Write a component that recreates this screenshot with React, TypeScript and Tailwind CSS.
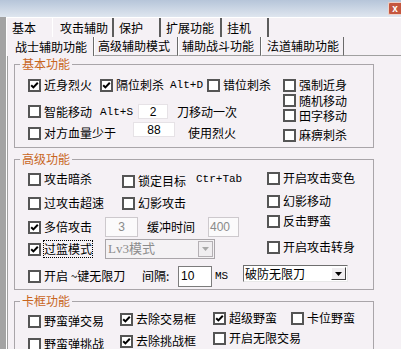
import React from 'react'

/** Classic sunken checkbox, 13px square. */
function Box({ checked }: { checked?: boolean }) {
  return (
    <span className="w-[13px] h-[13px] shrink-0 border-2 border-[#555555] bg-white flex items-center justify-center">
      {checked && (
        <svg width="9" height="9" viewBox="0 0 9 9">
          <path d="M1.2 4.2 3.4 6.4 7.8 1.8" fill="none" stroke="#000" strokeWidth="2" />
        </svg>
      )}
    </span>
  )
}

interface CheckProps {
  label: string
  checked?: boolean
  focus?: boolean
  className?: string
}

/** Checkbox with its caption to the right. */
function Check({ label, checked, focus, className = '' }: CheckProps) {
  return (
    <div className={`flex items-center shrink-0 ${className}`}>
      <Box checked={checked} />
      <span
        className={`ml-[3px] whitespace-nowrap ${
          focus ? 'leading-[16px] outline-1 outline-dotted outline-black' : 'leading-[14px]'
        }`}
      >
        {label}
      </span>
    </div>
  )
}

/** Group box with an orange caption sitting on the top border. */
function Group({
  title,
  className = '',
  children
}: {
  title: string
  className?: string
  children: React.ReactNode
}) {
  return (
    <div className={`relative ml-[6px] w-[360px] shrink-0 border border-[#a9a5a9] ${className}`}>
      <span className="absolute -top-[8px] left-[5px] px-[2px] bg-[#f5f1f5] text-[#c8661e] leading-[14px]">
        {title}
      </span>
      {children}
    </div>
  )
}

const mono = "font-['Liberation_Mono',monospace] text-[11px]"

export default function App() {
  return (
    <div className="w-[401px] h-[349px] overflow-hidden bg-[#f5f1f5] text-black text-[12px] leading-[16px] font-['Noto_Sans_CJK_SC',sans-serif] flex flex-col">
      {/* title bar */}
      <div className="h-[17px] shrink-0 bg-gradient-to-b from-[#b6c5d9] to-[#dfe6ef] flex items-start justify-end">
        <div className="mt-[2px] w-[13px] h-[13px] rounded-l-[2px] border border-r-0 border-[#efd2c8] bg-[#c5573f] text-white text-[10px] leading-[10px] font-bold font-['Liberation_Sans',sans-serif] flex items-center justify-center">
          x
        </div>
      </div>

      <div className="flex flex-1 min-h-0">
        {/* edge of the window behind */}
        <div className="w-[7px] shrink-0 bg-[#a3a3a3] border-r border-white" />

        <div className="flex-1 flex flex-col min-w-0">
          {/* top tab row */}
          <div className="h-[20px] shrink-0 flex border-t border-white">
            <div className="w-[45px] pl-[5px] flex items-center">基本</div>
            <div className="w-[62px] pl-[7px] flex items-center border-l border-white border-r-2 border-r-[#5c5c5c]">
              攻击辅助
            </div>
            <div className="w-[47px] pl-[5px] flex items-center border-r-2 border-r-[#5c5c5c]">保护</div>
            <div className="w-[61px] pl-[5px] flex items-center border-r-2 border-r-[#5c5c5c]">扩展功能</div>
            <div className="w-[47px] pl-[5px] flex items-center border-r-2 border-r-[#5c5c5c]">挂机</div>
          </div>

          {/* second tab row */}
          <div className="h-[19px] shrink-0 flex">
            <div className="w-[87px] pl-[8px] flex items-center border-r border-r-[#6a6a6a]">战士辅助功能</div>
            <div className="w-[84px] pl-[3px] flex items-center border-l border-white border-r border-r-[#6a6a6a] border-b border-b-[#a0a0a0]">
              高级辅助模式
            </div>
            <div className="w-[83px] pl-[3px] flex items-center border-l border-white border-r border-r-[#6a6a6a] border-b border-b-[#a0a0a0]">
              辅助战斗功能
            </div>
            <div className="w-[83px] pl-[5px] flex items-center border-l border-white border-r border-r-[#6a6a6a] border-b border-b-[#a0a0a0]">
              法道辅助功能
            </div>
            <div className="flex-1 border-b border-b-[#a0a0a0]" />
          </div>

          {/* tab page */}
          <div className="flex-1 flex flex-col border-l border-[#a0a0a0]">
            {/* 基本功能 */}
            <Group title="基本功能" className="mt-[8px] h-[84px] flex">
              <div className="ml-[13px] w-[255px] flex flex-col">
                <div className="mt-[10px] h-[20px] flex items-center">
                  <Check label="近身烈火" checked className="w-[72px]" />
                  <Check label="隔位刺杀" checked className="w-[70px]" />
                  <span className={`w-[37px] ${mono}`}>Alt+D</span>
                  <Check label="错位刺杀" />
                </div>
                <div className="mt-[6px] h-[21px] flex items-center">
                  <Check label="智能移动" className="w-[72px]" />
                  <span className={`w-[38px] ${mono}`}>Alt+S</span>
                  <div className="w-[30px] h-[15px] bg-white border border-[#e6e2e6] flex items-center justify-center font-['Liberation_Sans',sans-serif]">
                    2
                  </div>
                  <span className="ml-[9px]">刀移动一次</span>
                </div>
                <div className="h-[22px] flex items-center">
                  <Check label="对方血量少于" className="w-[105px]" />
                  <div className="self-start w-[42px] h-[15px] bg-white border border-[#e6e2e6] flex items-center justify-center font-['Liberation_Sans',sans-serif]">
                    88
                  </div>
                  <span className="ml-[13px]">使用烈火</span>
                </div>
              </div>
              <div className="flex flex-col">
                <Check label="强制近身" className="mt-[12px] h-[16px]" />
                <Check label="随机移动" className="h-[15px]" />
                <Check label="田字移动" className="h-[15px]" />
                <Check label="麻痹刺杀" className="mt-[4px] h-[16px]" />
              </div>
            </Group>

            {/* 高级功能 */}
            <Group title="高级功能" className="mt-[11px] h-[131px] flex flex-col">
              <div className="flex">
                <div className="ml-[13px] w-[239px] flex flex-col">
                  <div className="mt-[8px] h-[22px] flex items-center">
                    <Check label="攻击暗杀" className="w-[94px]" />
                    <Check label="锁定目标" className="w-[74px] mt-[4px]" />
                    <span className={mono}>Ctr+Tab</span>
                  </div>
                  <div className="mt-[2px] h-[22px] flex items-center">
                    <Check label="过攻击超速" className="w-[94px]" />
                    <Check label="幻影攻击" />
                  </div>
                  <div className="mt-[2px] h-[22px] flex items-center">
                    <Check label="多倍攻击" checked className="w-[77px]" />
                    <div className="w-[33px] h-[20px] bg-[#fbfafb] border border-[#cdc9cd] text-[#8a8a8a] flex items-center justify-center font-['Liberation_Sans',sans-serif]">
                      3
                    </div>
                    <span className="ml-[9px]">缓冲时间</span>
                    <div className="ml-[13px] w-[31px] h-[20px] bg-[#fbfafb] border border-[#cdc9cd] text-[#8a8a8a] pl-[1px] flex items-center font-['Liberation_Sans',sans-serif]">
                      400
                    </div>
                  </div>
                  <div className="h-[22px] flex items-center">
                    <Check label="过篮模式" checked focus className="w-[77px]" />
                    <div className="w-[110px] h-[20px] bg-[#f4f2f4] border border-[#a9a5a9] flex items-center">
                      <span className="pl-[2px] text-[#8c8c8c] font-['Liberation_Serif','Noto_Sans_CJK_SC',serif] text-[13px]">
                        Lv3模式
                      </span>
                      <div className="ml-auto mr-[1px] w-[15px] h-[16px] bg-[#f0eef0] border border-[#b4b0b4] flex items-center justify-center">
                        <svg width="7" height="4" viewBox="0 0 7 4">
                          <path d="M0 0h7L3.5 4z" fill="#a8a8a8" />
                        </svg>
                      </div>
                    </div>
                  </div>
                </div>
                <div className="flex flex-col">
                  <Check label="开启攻击变色" className="mt-[10px] h-[16px]" />
                  <Check label="幻影移动" className="mt-[7px] h-[16px]" />
                  <Check label="反击野蛮" className="mt-[4px] h-[16px]" />
                  <Check label="开启攻击转身" className="mt-[10px] h-[16px]" />
                </div>
              </div>
              <div className="ml-[13px] mt-[5px] h-[22px] flex items-center">
                <Check label="开启 ~键无限刀" className="w-[114px]" />
                <span className="w-[36px]">间隔:</span>
                <div className="w-[34px] h-[21px] bg-white border border-[#7c7c7c] pl-[2px] flex items-center font-['Liberation_Sans',sans-serif]">
                  10
                </div>
                <span className={`ml-[3px] w-[28px] ${mono} text-[10px]`}>MS</span>
                <div className="self-start w-[105px] h-[17px] bg-white border border-t-[#6e6e6e] border-l-[#6e6e6e] border-r-[#e8e8e8] border-b-[#e8e8e8] flex items-center">
                  <span className="pl-[1px]">破防无限刀</span>
                  <div className="ml-auto mr-px w-[15px] h-[13px] bg-[#f0eef0] border border-t-white border-l-white border-r-[#404040] border-b-[#404040] flex items-center justify-center">
                    <svg width="7" height="4" viewBox="0 0 7 4">
                      <path d="M0 0h7L3.5 4z" fill="#000" />
                    </svg>
                  </div>
                </div>
              </div>
            </Group>

            {/* 卡框功能 */}
            <Group title="卡框功能" className="mt-[11px] h-[60px] flex">
              <div className="ml-[13px] w-[92px] flex flex-col">
                <Check label="野蛮弹交易" className="mt-[11px] h-[16px]" />
                <Check label="野蛮弹挑战" className="mt-[7px] h-[16px]" />
              </div>
              <div className="w-[93px] flex flex-col">
                <Check label="去除交易框" checked className="mt-[9px] h-[16px]" />
                <Check label="去除挑战框" checked className="mt-[6px] h-[16px]" />
              </div>
              <div className="w-[78px] flex flex-col">
                <Check label="超级野蛮" checked className="mt-[8px] h-[16px]" />
                <Check label="开启无限交易" className="mt-[4px] h-[16px]" />
              </div>
              <div className="flex flex-col">
                <Check label="卡位野蛮" className="mt-[8px] h-[16px]" />
              </div>
            </Group>
          </div>
        </div>
      </div>
    </div>
  )
}
